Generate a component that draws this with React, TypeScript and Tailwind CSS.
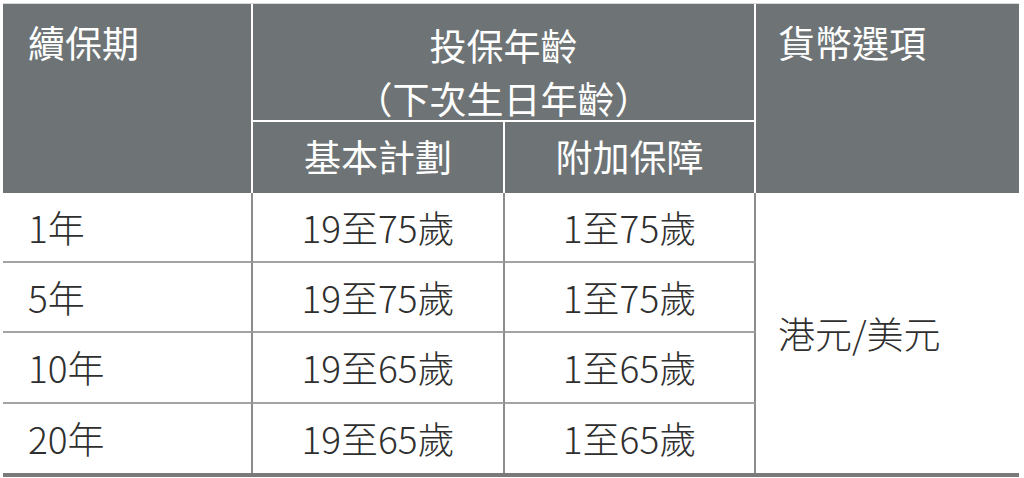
const font = { fontFamily: '"Noto Sans CJK TC", "Noto Sans", sans-serif' };

const rows = [
  { term: "1年", basic: "19至75歲", rider: "1至75歲" },
  { term: "5年", basic: "19至75歲", rider: "1至75歲" },
  { term: "10年", basic: "19至65歲", rider: "1至65歲" },
  { term: "20年", basic: "19至65歲", rider: "1至65歲" },
];

export default function App() {
  return (
    <div className="h-[478px] w-[1024px] bg-white pl-[3px] pt-[3px]" style={font}>
      <div className="w-[1016px] border-t border-[#d9d9d9]">
        <div className="grid grid-cols-[250px_252px_251px_263px] grid-rows-[118px_71px_70px_70px_71px_69px] border-b-4 border-[#7a7a7a] text-[37px] leading-none">
          <div className="col-start-1 row-span-2 row-start-1 border-r-2 border-white bg-[#6e7476] pl-[25px] pt-[20px] text-white">
            續保期
          </div>
          <div className="col-span-2 col-start-2 row-start-1 flex flex-col items-center border-b-2 border-r-2 border-white bg-[#6e7476] pt-[15px] text-[37px] leading-[53px] text-white">
            <span>投保年齡</span>
            <span>（下次生日年齡）</span>
          </div>
          <div className="col-start-4 row-span-2 row-start-1 bg-[#6e7476] pl-[22px] pt-[20px] text-white">
            貨幣選項
          </div>
          <div className="col-start-2 row-start-2 flex items-center justify-center border-r-2 border-white bg-[#6e7476] pb-[2px] text-white">
            基本計劃
          </div>
          <div className="col-start-3 row-start-2 flex items-center justify-center border-r-2 border-white bg-[#6e7476] pb-[2px] text-white">
            附加保障
          </div>

          {rows.map((r, i) => {
            const line = i < rows.length - 1 ? "border-b-2 border-b-[#a3a3a3]" : "";
            return [
              <div
                key={`t${i}`}
                className={`col-start-1 flex items-center border-r-2 border-r-[#8c8c8c] pl-[25px] font-light text-[#2f2f2f] ${line}`}
              >
                {r.term}
              </div>,
              <div
                key={`b${i}`}
                className={`col-start-2 flex items-center justify-center border-r-2 border-r-[#8c8c8c] font-light text-[#2f2f2f] ${line}`}
              >
                {r.basic}
              </div>,
              <div
                key={`r${i}`}
                className={`col-start-3 flex items-center justify-center border-r-2 border-r-[#8c8c8c] font-light text-[#2f2f2f] ${line}`}
              >
                {r.rider}
              </div>,
            ];
          })}
          <div className="col-start-4 row-span-4 row-start-3 flex items-center pl-[22px] font-light text-[#2f2f2f]">
            港元/美元
          </div>
        </div>
      </div>
    </div>
  );
}
